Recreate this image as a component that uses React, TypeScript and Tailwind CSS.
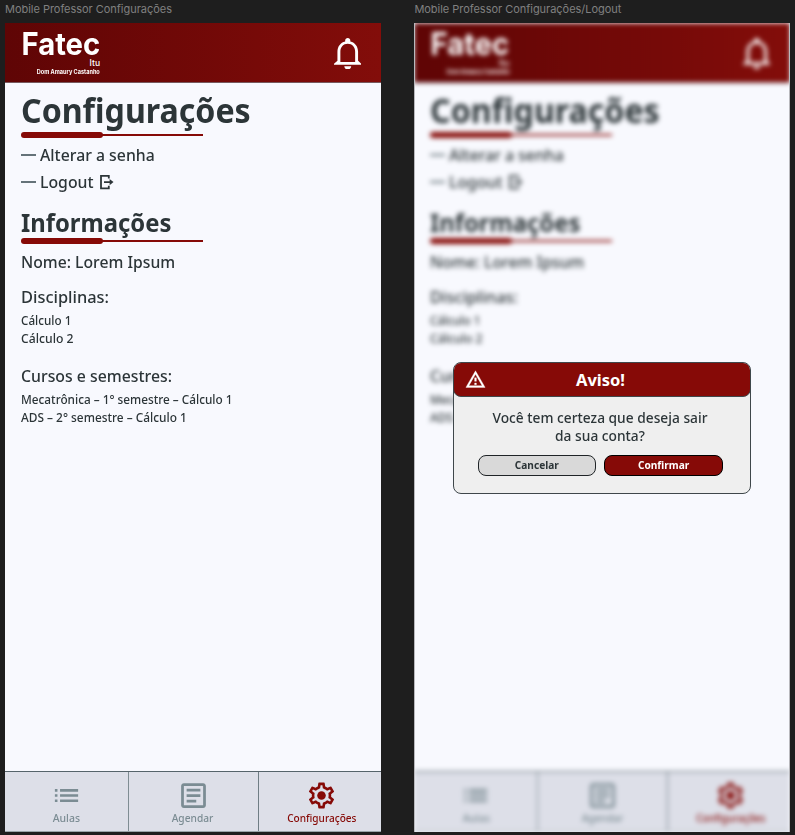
import { MdList, MdOutlineArticle, MdOutlineWarningAmber } from "react-icons/md";

function Underline() {
  return (
    <div className="flex h-1.5 w-[182px] items-center">
      <div className="h-1.5 w-[82px] rounded-full bg-[#860a07]" />
      <div className="-ml-0.5 h-0.5 flex-1 bg-[#860a07]" />
    </div>
  );
}

function Bell() {
  return (
    <svg className="h-[31.5px] w-[27.5px]" viewBox="4 2.5 16 19.5" preserveAspectRatio="none" fill="white">
      <path d="M12 22c1.1 0 2-.9 2-2h-4c0 1.1.9 2 2 2zm6-6v-5c0-3.07-1.63-5.64-4.5-6.32V4c0-.83-.67-1.5-1.5-1.5s-1.5.67-1.5 1.5v.68C7.64 5.36 6 7.92 6 11v5.6l-2 1.9v.6h16v-.6l-2-1.9zm-2 1.3H7.7v-6.3c0-2.7 1.7-4.9 4.3-4.9s4.3 2.2 4.3 4.9v6.3z" />
    </svg>
  );
}

function Exit() {
  return (
    <svg className="ml-[7px] h-4 w-[14px]" viewBox="0 0 14 16" fill="none" stroke="#2c3538" strokeWidth="1.8">
      <path d="M8.8 4.4V1.8H1v12.6h7.8v-2.6M4 8.1h7" />
      <path d="M9.6 5l3.9 3.1-3.9 3.1z" fill="#2c3538" stroke="none" />
    </svg>
  );
}

function Gear() {
  return (
    <svg className="size-[31px]" viewBox="0 0 24 24" fill="#860a07">
      <path d="M19.43 12.98c.04-.32.07-.64.07-.98s-.03-.66-.07-.98l2.11-1.65c.19-.15.24-.42.12-.64l-2-3.46a.5.5 0 0 0-.61-.22l-2.49 1c-.52-.4-1.08-.73-1.69-.98l-.38-2.65A.488.488 0 0 0 14 2h-4c-.25 0-.46.18-.49.42l-.38 2.65c-.61.25-1.17.59-1.69.98l-2.49-1a.5.5 0 0 0-.61.22l-2 3.46c-.13.22-.07.49.12.64l2.11 1.65c-.04.32-.07.65-.07.98s.03.66.07.98l-2.11 1.65c-.19.15-.24.42-.12.64l2 3.46c.12.22.39.3.61.22l2.49-1c.52.4 1.08.73 1.69.98l.38 2.65c.03.24.24.42.49.42h4c.25 0 .46-.18.49-.42l.38-2.65c.61-.25 1.17-.59 1.69-.98l2.49 1c.23.09.49 0 .61-.22l2-3.46c.12-.22.07-.49-.12-.64l-2.11-1.65zm-1.98-1.71c.04.31.05.52.05.73 0 .21-.02.43-.05.73l-.14 1.13.89.7 1.08.84-.7 1.21-1.27-.51-1.04-.42-.9.68c-.43.32-.84.56-1.25.73l-1.06.43-.16 1.13-.2 1.35h-1.4l-.19-1.35-.16-1.13-1.06-.43c-.43-.18-.83-.41-1.23-.71l-.91-.7-1.06.43-1.27.51-.7-1.21 1.08-.84.89-.7-.14-1.13c-.03-.31-.05-.54-.05-.74s.02-.43.05-.73l.14-1.13-.89-.7-1.08-.84.7-1.21 1.27.51 1.04.42.9-.68c.43-.32.84-.56 1.25-.73l1.06-.43.16-1.13.2-1.35h1.39l.19 1.35.16 1.13 1.06.43c.43.18.83.41 1.23.71l.91.7 1.06-.43 1.27-.51.7 1.21-1.07.85-.89.7.14 1.13z" />
      <circle cx="12" cy="12" r="3.3" />
    </svg>
  );
}

function Screen() {
  return (
    <div className="flex h-full w-full flex-col bg-[#f8f9fe] text-[#2c3538]">
      <header className="flex h-[60px] shrink-0 justify-between border-b border-[#77595e] bg-linear-to-r from-[#5f0505] to-[#830d0a] pr-5 pl-4 text-white">
        <div className="flex w-[79px] flex-col items-end pt-[10px] font-['Inter',sans-serif] whitespace-nowrap">
          <span className="origin-right scale-x-[0.935] text-[31.3px] leading-[23px] font-bold">Fatec</span>
          <span className="mt-px text-[8.5px] leading-[12px] font-medium">Itu</span>
          <span className="origin-right scale-x-[0.93] text-[6px] leading-[5px] font-bold">Dom Amaury Castanho</span>
        </div>
        <div className="pt-[14.5px]">
          <Bell />
        </div>
      </header>
      <main className="flex flex-1 flex-col items-start pt-[5px] pl-4 font-medium whitespace-nowrap">
        <h1 className="h-11 origin-left scale-x-[0.945] text-[34px] leading-[44px] font-bold">Configurações</h1>
        <Underline />
        <div className="mt-[3px] flex h-[27px] items-center">
          <div className="mr-1 h-0.5 w-[15px] bg-[#657379]" />
          <span className="origin-left scale-x-[0.93] text-[17px] leading-[28px]">Alterar a senha</span>
        </div>
        <div className="flex h-[27px] items-center">
          <div className="mr-1 h-0.5 w-[15px] bg-[#657379]" />
          <span className="w-[53px] origin-left scale-x-[0.93] text-[17px] leading-[27px]">Logout</span>
          <Exit />
        </div>
        <h2 className="mt-3 h-[31px] origin-left scale-x-[0.953] text-[25px] leading-[31px] font-bold">Informações</h2>
        <Underline />
        <p className="mt-2 origin-left scale-x-[0.925] text-[17px] leading-5">Nome: Lorem Ipsum</p>
        <p className="mt-[14px] origin-left scale-x-[0.965] text-[17px] leading-[21px]">Disciplinas:</p>
        <p className="mt-[5px] origin-left scale-x-[0.935] text-[12.5px] leading-[18px]">Cálculo 1</p>
        <p className="origin-left scale-x-[0.975] text-[12.5px] leading-[18px]">Cálculo 2</p>
        <p className="mt-[17px] origin-left scale-x-[0.93] text-[17px] leading-[21px]">Cursos e semestres:</p>
        <p className="mt-[5px] origin-left scale-x-[0.943] text-[12.5px] leading-[18px]">Mecatrônica – 1° semestre – Cálculo 1</p>
        <p className="origin-left scale-x-[0.95] text-[12.5px] leading-[18px]">ADS – 2° semestre – Cálculo 1</p>
      </main>
      <nav className="flex h-[61px] shrink-0 border-y border-t-[#56646b] border-b-[#9aa5a9] bg-[#dddfe8] text-[11px] leading-[14px] font-medium text-[#7b8c93]">
        <div className="flex w-[124px] flex-col items-center border-r border-[#7f8d93] pt-2">
          <MdList className="size-[31px]" />
          <span className="scale-x-[0.95] leading-[14px]">Aulas</span>
        </div>
        <div className="flex w-[130px] flex-col items-center border-r border-[#6f7d84] pt-[7px] pr-px">
          <MdOutlineArticle className="size-[33px] shrink-0" />
          <span className="-mt-px scale-x-[0.925]">Agendar</span>
        </div>
        <div className="flex flex-1 flex-col items-center pt-2 pl-[3px] text-[#860a07]">
          <Gear />
          <span className="scale-x-[0.915]">Configurações</span>
        </div>
      </nav>
    </div>
  );
}

function Dialog() {
  return (
    <div className="absolute top-[339px] left-[38.6px] h-[132px] w-[298px] overflow-hidden rounded-lg border border-[#3f474b] bg-[#efefef] text-[#2c3538]">
      <div className="-mx-px -mt-px flex h-[35px] items-center rounded-lg border border-[#3f474b] bg-[#860a07] pr-[35px] pl-[11px] text-white">
        <MdOutlineWarningAmber className="size-[21px]" stroke="white" strokeWidth="0.4" />
        <span className="flex-1 pt-px text-center text-[16.5px] font-bold">Aviso!</span>
      </div>
      <div className="mt-[11px] -ml-1 scale-x-[0.917] text-center text-[15px] leading-[18.2px] font-medium whitespace-nowrap">
        <p>Você tem certeza que deseja sair</p>
        <p>da sua conta?</p>
      </div>
      <div className="mt-[10.6px] ml-6 flex gap-2 text-[10.5px] leading-[19px] font-bold">
        <button className="h-[21px] w-[118.5px] rounded-lg border border-[#1f2427] bg-[#d9d9d9]">
          <span className="inline-block scale-x-[0.965]">Cancelar</span>
        </button>
        <button className="h-[21px] w-[118.5px] rounded-lg border border-black bg-[#860a07] text-white">
          <span className="inline-block scale-x-[0.965]">Confirmar</span>
        </button>
      </div>
    </div>
  );
}

export default function App() {
  return (
    <div className="flex h-[835px] w-[795px] gap-[33.4px] overflow-hidden bg-[#1e1e1e] pl-[5px] font-['Noto_Sans',sans-serif]">
      <section className="flex w-[376px] shrink-0 flex-col">
        <p className="h-[23px] font-['Inter',sans-serif] text-[11px] leading-[18px] tracking-[-0.03px] whitespace-nowrap text-[#808080]">Mobile Professor Configurações</p>
        <div className="h-[809px]">
          <Screen />
        </div>
      </section>
      <section className="flex w-[376px] shrink-0 flex-col">
        <p className="h-[23px] font-['Inter',sans-serif] text-[11px] leading-[18px] tracking-[-0.03px] whitespace-nowrap text-[#808080]">Mobile Professor Configurações/Logout</p>
        <div className="relative h-[809px]">
          <div className="h-full overflow-hidden border-x border-[#b9b9bd] bg-[#f8f9fe]">
            <div className="-mx-px h-full blur-[2.6px]">
              <Screen />
            </div>
          </div>
          <Dialog />
        </div>
      </section>
    </div>
  );
}
